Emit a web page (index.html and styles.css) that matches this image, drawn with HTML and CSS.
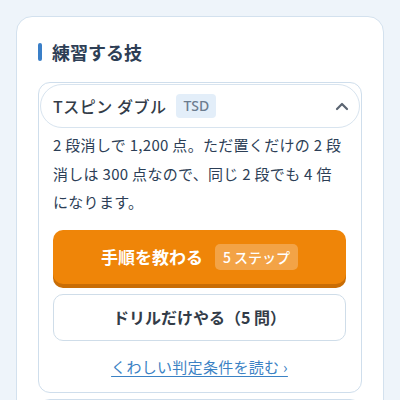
FILE: index.html
```html
<!DOCTYPE html>
<html lang="ja">
<head>
<meta charset="utf-8">
<link rel="stylesheet" href="styles.css">
</head>
<body>
<section class="panel">
  <h2 class="panel-title"><span class="bar"></span>練習する技</h2>
  <div class="tech">
    <div class="tech-head">
      <span class="tech-name">Tスピン ダブル</span>
      <span class="tag">TSD</span>
      <svg class="chev" width="14" height="10" viewBox="0 0 14 10"><path d="M2 8 L7 3 L12 8" fill="none" stroke="#5b6572" stroke-width="2.2" stroke-linecap="round" stroke-linejoin="round"/></svg>
    </div>
    <div class="tech-body">
      <p class="desc">2 段消しで 1,200 点。ただ置くだけの 2 段消しは 300 点なので、同じ 2 段でも 4 倍になります。</p>
      <button class="btn-primary">手順を教わる<span class="badge">5 ステップ</span></button>
      <button class="btn-secondary">ドリルだけやる（5 問）</button>
      <a class="more" href="#">くわしい判定条件を読む ›</a>
    </div>
  </div>
  <div class="tech next"></div>
</section>
</body>
</html>
```
FILE: styles.css
```css
html, body { margin: 0; padding: 0; }
body {
  background: #eef4fa;
  font-family: "Noto Sans CJK JP", "Noto Sans", sans-serif;
  color: #2c3e56;
}
.panel {
  margin: 16px 16px 0;
  background: #fff;
  border: 1px solid #d3e1ee;
  border-radius: 16px;
  padding: 22px 21px 0;
  height: 420px;
  box-sizing: border-box;
}
.panel-title {
  margin: 0 0 17px;
  display: flex;
  align-items: center;
  gap: 10px;
  font-size: 18px;
  line-height: 26px;
  font-weight: 700;
  color: #2d3e55;
}
.bar {
  width: 4px;
  height: 18px;
  border-radius: 2px;
  background: #3a7fc8;
}
.tech {
  border: 1px solid #cfdeec;
  border-radius: 12px;
}
.tech.next { margin-top: 6px; height: 40px; }
.tech-head {
  margin: 1px;
  height: 42px;
  border: 1px solid #d8e4ef;
  border-radius: 22px;
  padding: 0 10px 0 12px;
  display: flex;
  align-items: center;
}
.tech-name {
  font-size: 16px;
  letter-spacing: 0.5px;
  font-weight: 500;
  color: #333c48;
}
.tag {
  margin-left: 10px;
  background: #e3eef9;
  color: #6b7c8f;
  font-size: 14px;
  line-height: 24px;
  padding: 0 7px;
  border-radius: 4px;
  font-family: "Noto Sans", sans-serif;
  font-weight: 500;
}
.chev { margin-left: auto; }
.tech-body {
  padding: 2px 15px 15px 14px;
  display: flex;
  flex-direction: column;
}
.desc {
  margin: 0;
  font-size: 15px;
  letter-spacing: 0.3px;
  line-height: 28.5px;
  color: #2c3e56;
}
.btn-primary {
  margin-top: 13px;
  height: 54px;
  border: none;
  border-radius: 10px;
  background: #ef8508;
  box-shadow: 0 4px 0 #c96d05;
  color: #fff;
  font-family: inherit;
  font-size: 17px;
  font-weight: 700;
  display: flex;
  align-items: center;
  justify-content: center;
  gap: 12px;
}
.badge {
  background: rgba(255,255,255,0.25);
  border-radius: 5px;
  font-size: 14px;
  font-weight: 500;
  line-height: 26px;
  padding: 0 8px;
}
.btn-secondary {
  margin-top: 10px;
  height: 47px;
  background: #fff;
  border: 1px solid #cfdde9;
  border-radius: 10px;
  font-family: inherit;
  font-size: 16px;
  font-weight: 700;
  color: #333c48;
}
.more {
  margin-top: 16px;
  align-self: center;
  font-size: 15px;
  letter-spacing: 0.3px;
  line-height: 20px;
  color: #3b82c4;
  text-decoration: underline;
  text-underline-offset: 3px;
}
```
